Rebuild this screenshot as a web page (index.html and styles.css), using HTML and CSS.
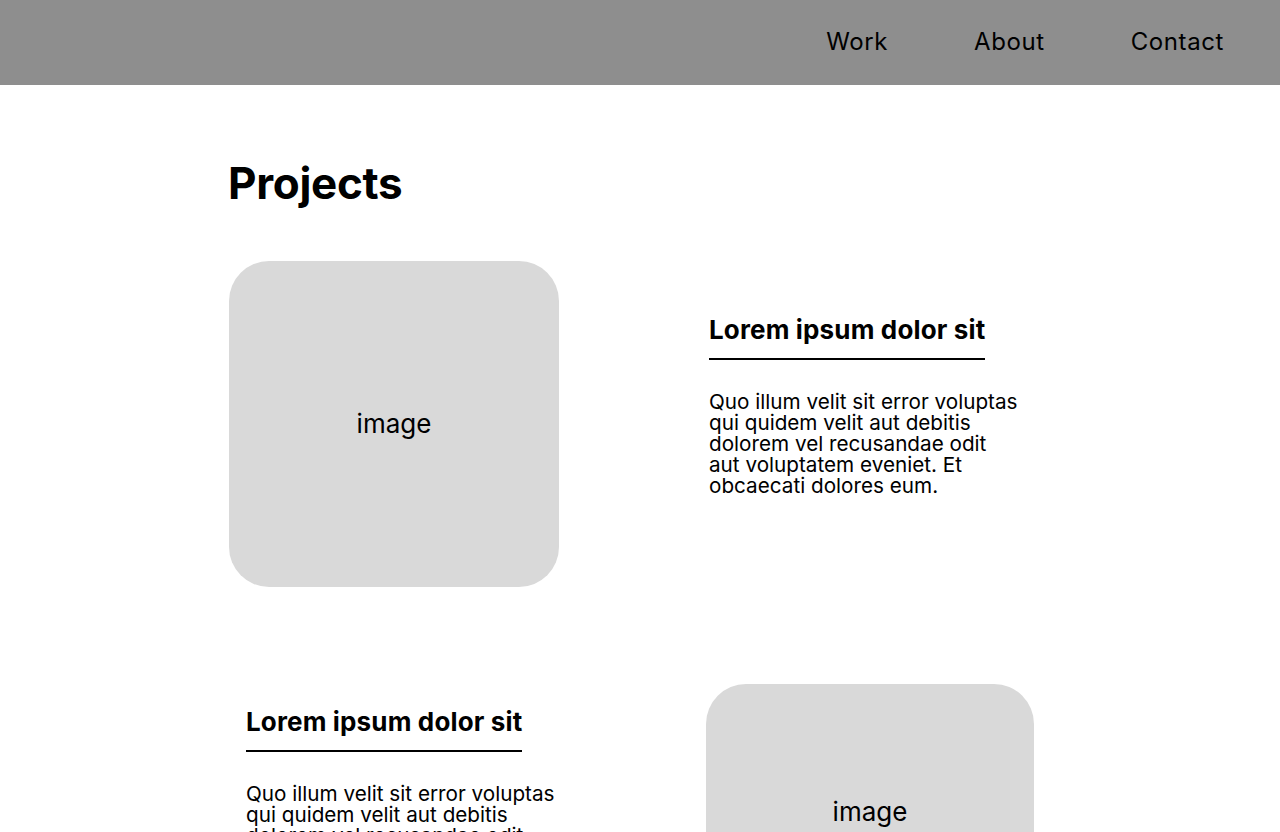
FILE: index.html
```html
<!DOCTYPE html>
<html lang="en">
<head>
<meta charset="utf-8">
<title>Projects</title>
<link rel="stylesheet" href="styles.css">
</head>
<body>
<header class="topbar">
  <nav class="nav">
    <a href="#" class="nav-link">Work</a>
    <a href="#" class="nav-link">About</a>
    <a href="#" class="nav-link">Contact</a>
  </nav>
</header>
<main class="content">
  <h1 class="page-title">Projects</h1>
  <section class="project project-a">
    <div class="image-box box-a"><span>image</span></div>
    <div class="project-text text-a">
      <h2 class="project-title">Lorem ipsum dolor sit</h2>
      <p class="project-desc">Quo illum velit sit error voluptas qui quidem velit aut debitis dolorem vel recusandae odit aut voluptatem eveniet. Et obcaecati dolores eum.</p>
    </div>
  </section>
  <section class="project project-b">
    <div class="project-text text-b">
      <h2 class="project-title">Lorem ipsum dolor sit</h2>
      <p class="project-desc">Quo illum velit sit error voluptas qui quidem velit aut debitis dolorem vel recusandae odit aut voluptatem eveniet. Et obcaecati dolores eum.</p>
    </div>
    <div class="image-box box-b"><span>image</span></div>
  </section>
</main>
</body>
</html>
```
FILE: styles.css
```css
* { box-sizing: border-box; }
html, body { margin: 0; padding: 0; }
body {
  font-family: Inter, "Noto Sans", sans-serif;
  color: #000;
  background: #fff;
  overflow: hidden;
  height: 832px;
}
.topbar {
  height: 85px;
  background: #8e8e8e;
  display: flex;
  justify-content: flex-end;
  align-items: center;
  padding-right: 56px;
  padding-bottom: 2px;
}
.nav { display: flex; gap: 86px; align-items: center; }
.nav-link {
  color: #000;
  text-decoration: none;
  font-size: 24px;
  line-height: 1;
  letter-spacing: 0.6px;
}
.content { padding-left: 228px; padding-top: 72px; }
.page-title {
  margin: 0;
  font-size: 44px;
  font-weight: 700;
  line-height: 1.2;
  letter-spacing: -0.3px;
}
.project { display: flex; }
.project-a { margin-top: 51px; }
.project-b { margin-top: 97px; }
.image-box {
  background: #d9d9d9;
  border-radius: 40px;
  display: flex;
  align-items: center;
  justify-content: center;
  font-size: 26px;
}
.box-a { width: 330px; height: 326px; margin-left: 1px; }
.box-b { width: 328px; height: 326px; margin-left: 140px; align-items: flex-start; padding-top: 112px; }
.text-a { margin-left: 150px; padding-top: 52px; width: 320px; }
.text-b { margin-left: 18px; padding-top: 21px; width: 320px; }
.project-title {
  margin: 0;
  display: inline-block;
  font-size: 26px;
  font-weight: 700;
  line-height: 1.3;
  padding-bottom: 11px;
  border-bottom: 2px solid #000;
  letter-spacing: 0.15px;
}
.project-desc {
  margin: 31px 0 0;
  font-size: 20.7px;
  line-height: 21px;
  width: 312px;
}
```
